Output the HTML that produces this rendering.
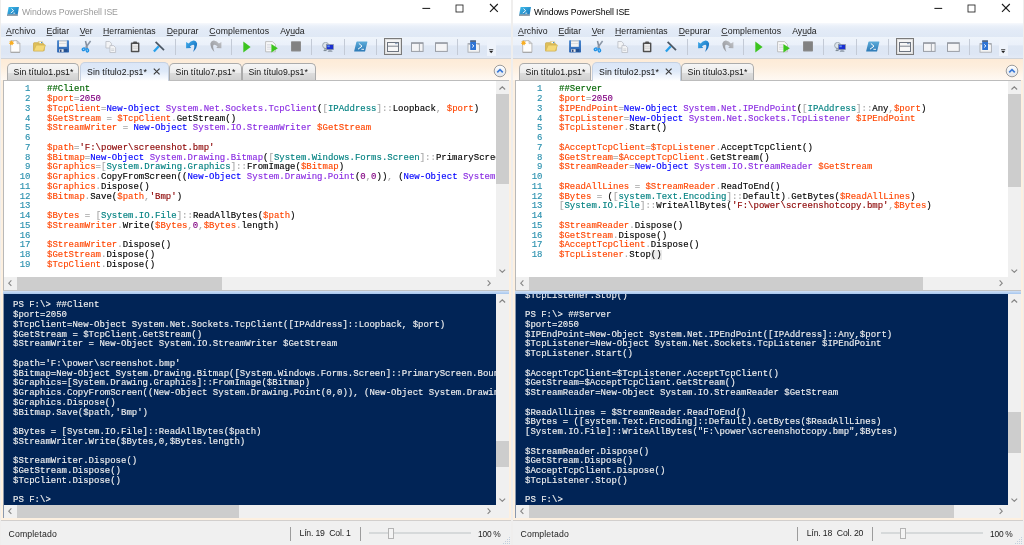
<!DOCTYPE html>
<html lang="es"><head><meta charset="utf-8"><title>Windows PowerShell ISE</title>
<style>
*{box-sizing:border-box;margin:0;padding:0}
html,body{width:1024px;height:545px;overflow:hidden;background:#fdf0e0}
body{position:relative;font-family:"Liberation Sans","DejaVu Sans",sans-serif;font-size:9px;color:#1a1a1a}
.win{position:absolute;top:0;will-change:transform;width:512px;height:545px;background:#fdf0e0;overflow:hidden}
.win>*{position:absolute;left:0;width:512px}
.win>.bl{left:0;top:0;width:1px;height:545px;background:#efeeed;z-index:5}
.win>.br{left:511px;top:0;width:1px;height:545px;background:#efeeed;z-index:5}
.titlebar{top:0;height:23px;background:#fff}
.appicon{position:absolute;left:7px;top:7px;width:12px;height:9px}
.title{position:absolute;left:22px;top:5.8px;height:12px;line-height:12px;font-size:8.7px;white-space:nowrap;color:#000}
.inactive .title{color:#9a9a9a}
.wc{position:absolute}
.menubar{top:23px;height:14px;background:linear-gradient(#f7f9fd 0,#eaf0f9 22%,#e3ebf7 50%,#dfe8f5 100%)}
.mi{position:absolute;top:1.5px;height:12px;line-height:12px;font-size:8.7px;white-space:nowrap;color:#1b1b1b}
.mi u{text-decoration:underline;text-decoration-color:rgba(0,0,0,.6);text-underline-offset:1px;text-decoration-thickness:0.5px}
.toolbar{top:37px;height:21px;background:linear-gradient(#eff4fb 0,#eaf0fa 38%,#dee7f4 42%,#dde6f4 80%,#e3eaf6 100%)}
.toolbar svg{position:absolute}
.tsep{position:absolute;top:1.5px;width:1px;height:16px;background:#c3cad6}
.tabstrip{top:58px;height:22px;background:linear-gradient(#fdebd7 0,#fdeedd 35%,#fff9f3 100%);border-top:1px solid #cfd3d9}
.tab{position:absolute;top:4px;height:18px;border:1px solid #ababab;border-bottom:none;border-radius:5px 5px 0 0;background:linear-gradient(#f6f6f6 0,#ececec 50%,#dddddd 52%,#d0d0d0 100%);white-space:nowrap}
.tab .tt{position:absolute;left:5.5px;top:2.4px;line-height:12px;font-size:8.7px;color:#111}
.tab.act{top:3px;height:19px;background:linear-gradient(#dbe6f7 0,#dee9f8 45%,#f3f7fd 80%,#ffffff 100%);border-color:#c6d1e1;z-index:2}
.tab.act .tt{top:3.4px;left:6px}
.tx{position:absolute;left:71.5px;top:4.8px;width:7.4px;height:7px}
.tx path{stroke:#3c3c3c;stroke-width:1.35;fill:none}
.collapse{position:absolute;left:493px;top:5px;width:14px;height:14px}
.editor{top:80px;height:210px;left:3px!important;width:506px!important;background:#fff;border-left:1px solid #b9b9b9;border-top:1px solid #bcbcbc}
.edtext{position:absolute;left:0;top:0;width:492px;height:196px;overflow:hidden;font-family:"Liberation Mono","DejaVu Sans Mono",monospace;font-size:9px}
.ln,.cl,.kl{-webkit-text-stroke:0.14px;position:absolute;height:12px;line-height:12px;white-space:pre;letter-spacing:0}
.ln{left:0;width:26.5px;text-align:right;color:#2b91af}
.cl{left:43px;color:#000}
.c{color:#006400}.v{color:#ff4500}.o{color:#a9a9a9}.k{color:#0000ff}.a{color:#8a2be2}.n{color:#800080}.s{color:#8b0000}.t{color:#008080}
.hl{background:#ebebeb}
.vs{position:absolute;left:492px;width:13px;background:#f0f0f0}
.hs{position:absolute;left:0;width:505px;height:13px;background:#f0f0f0}
.thumb{position:absolute;left:0;width:13px;background:#cdcdcd}
.thumbh{position:absolute;top:0;height:13px;background:#cdcdcd}
.arr{position:absolute;left:3.2px;width:6.6px;height:4px}
.arrh{position:absolute;top:3.4px;width:4px;height:6.4px}
.arr path,.arrh path{fill:none;stroke:#858585;stroke-width:1.2}
.splitter{top:290px;height:4px;left:3px!important;width:506px!important;background:linear-gradient(#c4c4c4 0,#c4c4c4 22%,#cfe0f6 26%,#a6c6ee 100%)}
.console{top:294px;height:224px;left:3px!important;width:506px!important;background:#012456;border-left:1px solid #8a98ad}
.context{position:absolute;left:0;top:0;width:492px;height:211px;overflow:hidden;font-family:"Liberation Mono","DejaVu Sans Mono",monospace;font-size:9px;color:#f0f0f0}
.kl{left:9px}
.statusbar{top:520px;height:25px;background:#f0f0f0;border-top:1px solid #d2cfcd}
.st{position:absolute;top:7px;height:12px;line-height:12px;font-size:8.7px;white-space:nowrap;color:#1b1b1b}
.st.pos{top:5.8px}
.st.zoom{top:7.2px;font-size:8.4px}
.ssep{position:absolute;top:6px;width:1px;height:14px;background:#9c9c9c}
.strack{position:absolute;left:369px;top:10.6px;width:102px;height:2.8px;background:#e4e7e8;border:0.5px solid #d6d9da}
.sthumb{position:absolute;left:387.5px;top:7px;width:6.5px;height:11px;background:#f4f4f4;border:1px solid #b4b4b4}
.grip{position:absolute;left:501.5px;top:14.5px;width:9px;height:9px}

</style></head><body>

<div class="win inactive" style="left:0px"><i class="bl"></i><i class="br"></i>
 <div class="titlebar">
  <svg class="appicon" viewBox="0 0 12 9"><defs><linearGradient id="ag0" x1="0" y1="0" x2="1" y2="1"><stop offset="0" stop-color="#3fc0ee"/><stop offset="1" stop-color="#176cb3"/></linearGradient></defs><path d="M1.6 0 H12 L10.4 9 H0 Z" fill="url(#ag0)"/><path d="M0.3 7.3 H10.7 L10.4 9 H0 Z" fill="#93a0ab"/><path d="M4.6 1.5 L6.6 3.8 L3.8 6" fill="none" stroke="#fff" stroke-width="0.9"/><path d="M6.3 6.2 H8.2" stroke="#fff" stroke-width="0.8"/></svg>
  <span class="title" style="letter-spacing:-0.101px;">Windows PowerShell ISE</span>
  <svg class="wc" style="left:421.5px;top:3px" width="10" height="10" viewBox="0 0 10 10"><path d="M0.4 5.4 H8.2" stroke="#1c1c1c" stroke-width="1.05" fill="none"/></svg>
  <svg class="wc" style="left:455px;top:3.5px" width="10" height="10" viewBox="0 0 10 10"><rect x="1" y="1" width="7" height="7" stroke="#222" stroke-width="0.85" fill="none"/></svg>
  <svg class="wc" style="left:489px;top:3.2px" width="10" height="10" viewBox="0 0 10 10"><path d="M1 1 L8.8 8.8 M8.8 1 L1 8.8" stroke="#1c1c1c" stroke-width="1.15" fill="none"/></svg>
 </div>
 <div class="menubar">
  <span class="mi" style="left:6px;letter-spacing:0.088px;"><u>A</u>rchivo</span>
  <span class="mi" style="left:46.5px;letter-spacing:-0.034px;"><u>E</u>ditar</span>
  <span class="mi" style="left:79.7px;letter-spacing:-0.104px;"><u>V</u>er</span>
  <span class="mi" style="left:103px;letter-spacing:0.049px;"><u>H</u>erramientas</span>
  <span class="mi" style="left:166.7px;letter-spacing:0.071px;"><u>D</u>epurar</span>
  <span class="mi" style="left:209.3px;letter-spacing:0.130px;"><u>C</u>omplementos</span>
  <span class="mi" style="left:280.3px;letter-spacing:-0.070px;">Ay<u>u</u>da</span>
 </div>
 <div class="toolbar">
  <!-- new -->
  <svg style="left:9px;top:3px" width="12" height="13" viewBox="0 0 12 13"><path d="M1.7 0.7 H8 L10.9 3.6 V12.2 H1.7 Z" fill="#fdfdfd" stroke="#b4b4b4" stroke-width="0.9"/><path d="M1.7 12.4 H10.9" stroke="#9a9a9a" stroke-width="0.8"/><path d="M8 0.7 V3.6 H10.9 Z" fill="#dcdcdc" stroke="#b0b0b0" stroke-width="0.6"/><path d="M2.5 0.2 L3.2 1.6 L4.7 1.1 L4.1 2.6 L5.3 3.6 L3.8 4 L3.6 5.6 L2.5 4.5 L1.2 5.5 L1.2 3.9 L-0.3 3.4 L1 2.5 L0.4 1 L1.9 1.5 Z" fill="#f9ae22"/></svg>
  <!-- open -->
  <svg style="left:32.5px;top:4px" width="13" height="11" viewBox="0 0 13 11"><path d="M5 0.9 H9.6 V3.6 H5 Z" fill="#f3e6a8" stroke="#d1b04f" stroke-width="0.7"/><rect x="6.6" y="0.9" width="2.6" height="1.6" fill="#fff"/><rect x="8" y="1" width="1.2" height="1.1" fill="#3f8fd8"/><path d="M0.5 9.6 V2.4 Q0.5 1.7 1.2 1.7 H4.6 L5.6 2.8 H10.6 Q11.2 2.8 11.2 3.5 V9.6 Z" fill="#dfc05a" stroke="#c8a646" stroke-width="0.7"/><path d="M0.6 10.1 L3.2 4.1 H12.4 L10.4 10.1 Z" fill="#f4d978" stroke="#d3b352" stroke-width="0.7"/></svg>
  <!-- save -->
  <svg style="left:57px;top:3px" width="12" height="13" viewBox="0 0 12 13"><defs><linearGradient id="svg10" x1="0" y1="0" x2="0" y2="1"><stop offset="0" stop-color="#4a88cf"/><stop offset="1" stop-color="#2a63b0"/></linearGradient></defs><rect x="0.1" y="0.2" width="11.9" height="12.3" rx="0.7" fill="url(#svg10)"/><rect x="2" y="0.5" width="7.8" height="6.3" fill="#f4f4f4"/><rect x="2" y="0.5" width="7.8" height="1.1" fill="#c9c9c9"/><rect x="2" y="3.3" width="7.8" height="0.7" fill="#d4d4d4"/><rect x="2" y="9" width="8.4" height="2.9" fill="#24508f"/><rect x="2.2" y="9.2" width="4.4" height="2.7" fill="#e9e9e9"/><rect x="3" y="9.6" width="1.5" height="2.3" fill="#28437a"/></svg>
  <!-- cut -->
  <svg style="left:81px;top:3px" width="11" height="13" viewBox="0 0 11 13"><path d="M4.5 1 L6.2 8.4" stroke="#7f8b9b" stroke-width="1.5" fill="none"/><path d="M9.6 1 L4.6 7.8" stroke="#8a96a6" stroke-width="1.5" fill="none"/><ellipse cx="2.7" cy="9.2" rx="1.5" ry="1.2" transform="rotate(-35 2.7 9.2)" fill="#8fd0f7" stroke="#1e8fe4" stroke-width="1.3"/><ellipse cx="6.3" cy="10.3" rx="1.2" ry="1.7" transform="rotate(-15 6.3 10.3)" fill="#8fd0f7" stroke="#1e8fe4" stroke-width="1.3"/></svg>
  <!-- copy (disabled) -->
  <svg style="left:105px;top:4px" width="12" height="12" viewBox="0 0 12 12"><path d="M0.9 0.5 H4.6 L6.4 2.3 V7 H0.9 Z" fill="#f3f4f6" stroke="#b9bdc4" stroke-width="0.8"/><path d="M4.9 4.6 H8.6 L10.6 6.6 V11.5 H4.9 Z" fill="#f3f4f6" stroke="#b9bdc4" stroke-width="0.8"/><path d="M6.2 8 H9.2 M6.2 9.5 H9.2" stroke="#c3c7cd" stroke-width="0.7"/></svg>
  <!-- paste -->
  <svg style="left:130px;top:3.5px" width="11" height="12" viewBox="0 0 11 12"><rect x="0.8" y="1.6" width="8.6" height="9.6" rx="0.8" fill="#4e4e4e"/><rect x="2.2" y="3" width="5.8" height="6.8" fill="#ededed"/><path d="M2.2 5.2 H8 M2.2 7.2 H8" stroke="#c4c4c4" stroke-width="0.7"/><rect x="3.2" y="0.6" width="3.8" height="2" rx="0.6" fill="#4e4e4e"/></svg>
  <!-- clear -->
  <svg style="left:153px;top:3.5px" width="12" height="12" viewBox="0 0 12 12"><path d="M5.8 5.2 L0.9 10.6" stroke="#27a0ea" stroke-width="2.2" fill="none"/><path d="M2.6 0.8 L11 9.2" stroke="#4a5663" stroke-width="1.7" fill="none"/></svg>
  <i class="tsep" style="left:174.5px"></i>
  <!-- undo -->
  <svg style="left:186px;top:3px" width="12" height="13" viewBox="0 0 12 13"><defs><linearGradient id="ug0" x1="0" y1="0" x2="1" y2="1"><stop offset="0" stop-color="#44b0ee"/><stop offset="1" stop-color="#0a62b5"/></linearGradient></defs><path d="M0.1 1.9 L0.1 8.3 L5.2 8 L3.9 6.2 Q6.5 4 8 4.9 Q9 6.5 7.1 11.9 Q11.5 7.5 11.1 3.2 Q10 0.2 7.5 0.5 Q4.5 0.8 2.6 3.6 Z" fill="url(#ug0)"/></svg>
  <!-- redo (disabled) -->
  <svg style="left:209.5px;top:3px" width="12" height="13" viewBox="0 0 12 13"><defs><linearGradient id="rg0" x1="0" y1="0" x2="1" y2="1"><stop offset="0" stop-color="#c2c4c8"/><stop offset="1" stop-color="#8d9096"/></linearGradient></defs><g transform="translate(11.5 0) scale(-1 1)"><path d="M0.1 1.9 L0.1 8.3 L5.2 8 L3.9 6.2 Q6.5 4 8 4.9 Q9 6.5 7.1 11.9 Q11.5 7.5 11.1 3.2 Q10 0.2 7.5 0.5 Q4.5 0.8 2.6 3.6 Z" fill="url(#rg0)"/></g></svg>
  <i class="tsep" style="left:231px"></i>
  <!-- run -->
  <svg style="left:243px;top:3.5px" width="8" height="12" viewBox="0 0 8 12"><path d="M0.3 0.4 L7.6 6 L0.3 11.4 Z" fill="#3cc41f"/></svg>
  <!-- run selection -->
  <svg style="left:265px;top:3.5px" width="13" height="12" viewBox="0 0 13 12"><path d="M0.6 0.6 H7.4 L10.4 3.4 V10.8 H0.6 Z" fill="#fafafa" stroke="#b2b2b2" stroke-width="0.8"/><path d="M2 3.4 H6 M2 5 H6 M2 6.6 H6 M2 8.2 H6" stroke="#c6c8d4" stroke-width="0.6"/><path d="M6.4 3 L12.8 7.2 L6.4 11.6 Z" fill="#3cc41f"/></svg>
  <!-- stop -->
  <svg style="left:291px;top:4px" width="10" height="11" viewBox="0 0 10 11"><rect x="0" y="0.2" width="10" height="10.3" rx="0.8" fill="#8c8c8c"/><rect x="1" y="1.2" width="8" height="8.3" fill="#828282"/></svg>
  <i class="tsep" style="left:311px"></i>
  <!-- remote -->
  <svg style="left:322px;top:4.5px" width="12" height="10" viewBox="0 0 12 10"><circle cx="3.6" cy="3.4" r="3" fill="#dde4ea" stroke="#8c9aa6" stroke-width="0.8"/><path d="M3 6 V8.4 M1.6 8.6 H4.6" stroke="#6d7a86" stroke-width="0.9"/><rect x="4.4" y="2.6" width="7" height="5" fill="#1a2fd0" stroke="#8a94a0" stroke-width="0.7"/><rect x="5.4" y="3.4" width="2.4" height="1.8" fill="#5b8df5"/><path d="M6.6 8.2 H9.6 M5.8 9.3 H10.4" stroke="#7a8794" stroke-width="0.8"/></svg>
  <i class="tsep" style="left:344px"></i>
  <!-- powershell -->
  <svg style="left:354px;top:3.5px" width="14" height="11" viewBox="0 0 14 11"><defs><linearGradient id="psg0" x1="0" y1="0" x2="0" y2="1"><stop offset="0" stop-color="#5eadda"/><stop offset="1" stop-color="#2c79b6"/></linearGradient></defs><path d="M3 0.4 H13 Q13.6 0.4 13.4 1 L11.2 10 Q11 10.6 10.4 10.6 H0.6 Q0 10.6 0.2 10 L2.4 1 Q2.6 0.4 3 0.4 Z" fill="url(#psg0)"/><path d="M4.8 2.4 L8 5.2 L4 8.2" fill="none" stroke="#fff" stroke-width="1"/><path d="M7.4 8.3 H10" stroke="#fff" stroke-width="0.9"/></svg>
  <i class="tsep" style="left:376px"></i>
  <!-- layout selected -->
  <div style="position:absolute;left:384px;top:1px;width:18px;height:17px;border:1px solid #7a7a7a;background:linear-gradient(#f6f6f6,#ececec);box-shadow:inset 0 0 0 1px #dedede"></div>
  <svg style="left:387px;top:4.5px" width="12" height="10" viewBox="0 0 12 10"><rect x="0.5" y="0.5" width="11" height="9" fill="#f7f7f7" stroke="#6e7580" stroke-width="1"/><path d="M0.5 4.2 H11.5" stroke="#6e7580" stroke-width="0.9"/><rect x="8" y="1.2" width="2.6" height="0.9" fill="#7f97b8"/></svg>
  <!-- layout right -->
  <svg style="left:411px;top:4.5px" width="13" height="10" viewBox="0 0 13 10"><rect x="0.5" y="0.8" width="11.6" height="8.6" fill="#f4f4f6" stroke="#9a9ea6" stroke-width="1"/><path d="M0.5 1.2 H12.1" stroke="#8e939c" stroke-width="1.1"/><path d="M8.4 1 V9.4" stroke="#9a9ea6" stroke-width="0.9"/></svg>
  <!-- layout max -->
  <svg style="left:435px;top:4.5px" width="13" height="10" viewBox="0 0 13 10"><rect x="0.5" y="0.8" width="11.8" height="8.6" fill="#f4f4f6" stroke="#9a9ea6" stroke-width="1"/><path d="M0.5 1.2 H12.3" stroke="#8e939c" stroke-width="1.1"/></svg>
  <i class="tsep" style="left:457px"></i>
  <!-- addon -->
  <svg style="left:467px;top:3px" width="13" height="13" viewBox="0 0 13 13"><rect x="1" y="3.6" width="11.4" height="8.6" fill="#f4f4f4" stroke="#a9adb3" stroke-width="0.9"/><rect x="1.4" y="3.4" width="1.6" height="1.2" fill="#9aa0a8"/><rect x="10.4" y="3.4" width="1.6" height="1.2" fill="#9aa0a8"/><rect x="3.2" y="0.4" width="5.8" height="9.6" rx="0.5" fill="#2f74d4"/><rect x="3.2" y="0.4" width="5.8" height="1.4" fill="#5a6576"/><path d="M5.2 4.4 L6.9 5.9 L5.2 7.4" fill="none" stroke="#fff" stroke-width="1"/></svg>
  <!-- overflow -->
  <div style="position:absolute;left:487px;top:1px;width:9px;height:18px;background:#eef3fb"></div>
  <svg style="left:489.2px;top:12.2px" width="4.4" height="5" viewBox="0 0 5 6"><path d="M0 0.5 H5" stroke="#222" stroke-width="0.9"/><path d="M0 2.2 H5 L2.5 5 Z" fill="#222"/></svg>

 </div>
 <div class="tabstrip">
  <div class="tab" style="left:7px;width:72px"><span class="tt" style="letter-spacing:0.098px;">Sin título1.ps1*</span></div><div class="tab act" style="left:80px;width:89px"><span class="tt" style="letter-spacing:0.098px;">Sin título2.ps1*</span><svg class="tx" viewBox="0 0 8 8"><path d="M0.7 0.7 L7.3 7.3 M7.3 0.7 L0.7 7.3"/></svg></div><div class="tab" style="left:169px;width:73px"><span class="tt" style="letter-spacing:0.098px;">Sin título7.ps1*</span></div><div class="tab" style="left:242px;width:74px"><span class="tt" style="letter-spacing:0.060px;">Sin título9.ps1*</span></div>
  <svg class="collapse" viewBox="0 0 14 14"><defs><linearGradient id="cg0" x1="0" y1="0" x2="0" y2="1"><stop offset="0" stop-color="#ffffff"/><stop offset="1" stop-color="#dfe3ea"/></linearGradient></defs><circle cx="7" cy="7" r="5.8" fill="url(#cg0)" stroke="#9c9c9c" stroke-width="1"/><path d="M4.2 8.4 L7 5.6 L9.8 8.4" fill="none" stroke="#3b79d6" stroke-width="1.7"/></svg>
 </div>
 <div class="editor">
  <div class="edtext">
<div class="ln" style="top:2.30px">1</div>
<div class="ln" style="top:12.05px">2</div>
<div class="ln" style="top:21.80px">3</div>
<div class="ln" style="top:31.55px">4</div>
<div class="ln" style="top:41.30px">5</div>
<div class="ln" style="top:51.05px">6</div>
<div class="ln" style="top:60.80px">7</div>
<div class="ln" style="top:70.55px">8</div>
<div class="ln" style="top:80.30px">9</div>
<div class="ln" style="top:90.05px">10</div>
<div class="ln" style="top:99.80px">11</div>
<div class="ln" style="top:109.55px">12</div>
<div class="ln" style="top:119.30px">13</div>
<div class="ln" style="top:129.05px">14</div>
<div class="ln" style="top:138.80px">15</div>
<div class="ln" style="top:148.55px">16</div>
<div class="ln" style="top:158.30px">17</div>
<div class="ln" style="top:168.05px">18</div>
<div class="ln" style="top:177.80px">19</div>
<div class="cl" style="top:2.30px"><span class="c">##Client</span></div>
<div class="cl" style="top:12.05px"><span class="v">$port</span><span class="o">=</span><span class="n">2050</span></div>
<div class="cl" style="top:21.80px"><span class="v">$TcpClient</span><span class="o">=</span><span class="k">New-Object</span> <span class="a">System.Net.Sockets.TcpClient</span>(<span class="o">[</span><span class="t">IPAddress</span><span class="o">]</span><span class="o">::</span>Loopback<span class="o">,</span> <span class="v">$port</span>)</div>
<div class="cl" style="top:31.55px"><span class="v">$GetStream</span> <span class="o">=</span> <span class="v">$TcpClient</span><span class="o">.</span>GetStream()</div>
<div class="cl" style="top:41.30px"><span class="v">$StreamWriter</span> <span class="o">=</span> <span class="k">New-Object</span> <span class="a">System.IO.StreamWriter</span> <span class="v">$GetStream</span></div>
<div class="cl" style="top:60.80px"><span class="v">$path</span><span class="o">=</span><span class="s">&#x27;F:\power\screenshot.bmp&#x27;</span></div>
<div class="cl" style="top:70.55px"><span class="v">$Bitmap</span><span class="o">=</span><span class="k">New-Object</span> <span class="a">System.Drawing.Bitmap</span>(<span class="o">[</span><span class="t">System.Windows.Forms.Screen</span><span class="o">]</span><span class="o">::</span>PrimaryScreen<span class="o">.</span>Bounds<span class="o">.</span>Width<span class="o">,</span> <span class="o">[</span><span class="t">System.Windows.Forms.Screen</span><span class="o">]</span><span class="o">::</span>PrimaryScreen<span class="o">.</span>Bounds<span class="o">.</span>Height)</div>
<div class="cl" style="top:80.30px"><span class="v">$Graphics</span><span class="o">=</span><span class="o">[</span><span class="t">System.Drawing.Graphics</span><span class="o">]</span><span class="o">::</span>FromImage(<span class="v">$Bitmap</span>)</div>
<div class="cl" style="top:90.05px"><span class="v">$Graphics</span><span class="o">.</span>CopyFromScreen((<span class="k">New-Object</span> <span class="a">System.Drawing.Point</span>(<span class="n">0</span><span class="o">,</span><span class="n">0</span>))<span class="o">,</span> (<span class="k">New-Object</span> <span class="a">System.Drawing.Point</span>(<span class="n">0</span><span class="o">,</span><span class="n">0</span>))<span class="o">,</span> <span class="v">$Bitmap</span><span class="o">.</span>Size)</div>
<div class="cl" style="top:99.80px"><span class="v">$Graphics</span><span class="o">.</span>Dispose()</div>
<div class="cl" style="top:109.55px"><span class="v">$Bitmap</span><span class="o">.</span>Save(<span class="v">$path</span><span class="o">,</span><span class="s">&#x27;Bmp&#x27;</span>)</div>
<div class="cl" style="top:129.05px"><span class="v">$Bytes</span> <span class="o">=</span> <span class="o">[</span><span class="t">System.IO.File</span><span class="o">]</span><span class="o">::</span>ReadAllBytes(<span class="v">$path</span>)</div>
<div class="cl" style="top:138.80px"><span class="v">$StreamWriter</span><span class="o">.</span>Write(<span class="v">$Bytes</span><span class="o">,</span><span class="n">0</span><span class="o">,</span><span class="v">$Bytes</span><span class="o">.</span>length)</div>
<div class="cl" style="top:158.30px"><span class="v">$StreamWriter</span><span class="o">.</span>Dispose()</div>
<div class="cl" style="top:168.05px"><span class="v">$GetStream</span><span class="o">.</span>Dispose()</div>
<div class="cl" style="top:177.80px"><span class="v">$TcpClient</span><span class="o">.</span>Dispose()</div>
  </div>
  <div class="vs" style="top:0;height:196px">
   <svg class="arr" style="top:4.8px" viewBox="0 0 7 4"><path d="M0.5 3.6 L3.5 0.7 L6.5 3.6"/></svg>
   <div class="thumb" style="top:13px;height:89.5px"></div>
   <svg class="arr" style="top:188.3px" viewBox="0 0 7 4"><path d="M0.5 0.5 L3.5 3.4 L6.5 0.5"/></svg>
  </div>
  <div class="hs" style="top:196px">
   <svg class="arrh" style="left:4px" viewBox="0 0 4 7"><path d="M3.5 0.5 L0.6 3.5 L3.5 6.5"/></svg>
   <div class="thumbh" style="left:12.5px;width:205.5px"></div>
   <svg class="arrh" style="left:483px" viewBox="0 0 4 7"><path d="M0.5 0.5 L3.4 3.5 L0.5 6.5"/></svg>
  </div>
 </div>
 <div class="splitter"></div>
 <div class="console">
  <div class="context">
<div class="kl" style="top:5.40px">PS F:\&gt; ##Client</div>
<div class="kl" style="top:15.15px">$port=2050</div>
<div class="kl" style="top:24.90px">$TcpClient=New-Object System.Net.Sockets.TcpClient([IPAddress]::Loopback, $port)</div>
<div class="kl" style="top:34.65px">$GetStream = $TcpClient.GetStream()</div>
<div class="kl" style="top:44.40px">$StreamWriter = New-Object System.IO.StreamWriter $GetStream</div>
<div class="kl" style="top:63.90px">$path=&#x27;F:\power\screenshot.bmp&#x27;</div>
<div class="kl" style="top:73.65px">$Bitmap=New-Object System.Drawing.Bitmap([System.Windows.Forms.Screen]::PrimaryScreen.Bounds.Width, [System.Windows.Forms.Screen]::PrimaryScreen.Bounds.Height)</div>
<div class="kl" style="top:83.40px">$Graphics=[System.Drawing.Graphics]::FromImage($Bitmap)</div>
<div class="kl" style="top:93.15px">$Graphics.CopyFromScreen((New-Object System.Drawing.Point(0,0)), (New-Object System.Drawing.Point(0,0)), $Bitmap.Size)</div>
<div class="kl" style="top:102.90px">$Graphics.Dispose()</div>
<div class="kl" style="top:112.65px">$Bitmap.Save($path,&#x27;Bmp&#x27;)</div>
<div class="kl" style="top:132.15px">$Bytes = [System.IO.File]::ReadAllBytes($path)</div>
<div class="kl" style="top:141.90px">$StreamWriter.Write($Bytes,0,$Bytes.length)</div>
<div class="kl" style="top:161.40px">$StreamWriter.Dispose()</div>
<div class="kl" style="top:171.15px">$GetStream.Dispose()</div>
<div class="kl" style="top:180.90px">$TcpClient.Dispose()</div>
<div class="kl" style="top:200.40px">PS F:\&gt;</div>
  </div>
  <div class="vs" style="top:0;height:211px">
   <svg class="arr" style="top:4.8px" viewBox="0 0 7 4"><path d="M0.5 3.6 L3.5 0.7 L6.5 3.6"/></svg>
   <div class="thumb" style="top:147px;height:26px"></div>
   <svg class="arr" style="top:203.7px" viewBox="0 0 7 4"><path d="M0.5 0.5 L3.5 3.4 L6.5 0.5"/></svg>
  </div>
  <div class="hs" style="top:211px">
   <svg class="arrh" style="left:4px" viewBox="0 0 4 7"><path d="M3.5 0.5 L0.6 3.5 L3.5 6.5"/></svg>
   <div class="thumbh" style="left:12.5px;width:222.2px"></div>
   <svg class="arrh" style="left:483px" viewBox="0 0 4 7"><path d="M0.5 0.5 L3.4 3.5 L0.5 6.5"/></svg>
  </div>
 </div>
 <div class="statusbar">
  <span class="st" style="left:8.5px;letter-spacing:0.154px;">Completado</span>
  <i class="ssep" style="left:290px"></i>
  <span class="st pos" style="left:299.5px;letter-spacing:-0.190px;">Lín. 19&nbsp; Col. 1</span>
  <i class="ssep" style="left:360px"></i>
  <i class="strack"></i><i class="sthumb"></i>
  <span class="st zoom" style="left:478px;word-spacing:-0.4px;letter-spacing:-0.192px;">100 %</span>
  <svg class="grip" viewBox="0 0 9 9"><g fill="#c3cfdd"><rect x="7" y="1" width="1" height="1"/><rect x="7" y="3" width="1" height="1"/><rect x="5" y="3" width="1" height="1"/><rect x="7" y="5" width="1" height="1"/><rect x="5" y="5" width="1" height="1"/><rect x="3" y="5" width="1" height="1"/><rect x="7" y="7" width="1" height="1"/><rect x="5" y="7" width="1" height="1"/><rect x="3" y="7" width="1" height="1"/><rect x="1" y="7" width="1" height="1"/></g></svg>
 </div>
</div>

<div class="win active" style="left:512px"><i class="bl"></i><i class="br"></i>
 <div class="titlebar">
  <svg class="appicon" viewBox="0 0 12 9"><defs><linearGradient id="ag1" x1="0" y1="0" x2="1" y2="1"><stop offset="0" stop-color="#3fc0ee"/><stop offset="1" stop-color="#176cb3"/></linearGradient></defs><path d="M1.6 0 H12 L10.4 9 H0 Z" fill="url(#ag1)"/><path d="M0.3 7.3 H10.7 L10.4 9 H0 Z" fill="#93a0ab"/><path d="M4.6 1.5 L6.6 3.8 L3.8 6" fill="none" stroke="#fff" stroke-width="0.9"/><path d="M6.3 6.2 H8.2" stroke="#fff" stroke-width="0.8"/></svg>
  <span class="title" style="letter-spacing:-0.101px;">Windows PowerShell ISE</span>
  <svg class="wc" style="left:421.5px;top:3px" width="10" height="10" viewBox="0 0 10 10"><path d="M0.4 5.4 H8.2" stroke="#1c1c1c" stroke-width="1.05" fill="none"/></svg>
  <svg class="wc" style="left:455px;top:3.5px" width="10" height="10" viewBox="0 0 10 10"><rect x="1" y="1" width="7" height="7" stroke="#222" stroke-width="0.85" fill="none"/></svg>
  <svg class="wc" style="left:489px;top:3.2px" width="10" height="10" viewBox="0 0 10 10"><path d="M1 1 L8.8 8.8 M8.8 1 L1 8.8" stroke="#1c1c1c" stroke-width="1.15" fill="none"/></svg>
 </div>
 <div class="menubar">
  <span class="mi" style="left:6px;letter-spacing:0.088px;"><u>A</u>rchivo</span>
  <span class="mi" style="left:46.5px;letter-spacing:-0.034px;"><u>E</u>ditar</span>
  <span class="mi" style="left:79.7px;letter-spacing:-0.104px;"><u>V</u>er</span>
  <span class="mi" style="left:103px;letter-spacing:0.049px;"><u>H</u>erramientas</span>
  <span class="mi" style="left:166.7px;letter-spacing:0.071px;"><u>D</u>epurar</span>
  <span class="mi" style="left:209.3px;letter-spacing:0.130px;"><u>C</u>omplementos</span>
  <span class="mi" style="left:280.3px;letter-spacing:-0.070px;">Ay<u>u</u>da</span>
 </div>
 <div class="toolbar">
  <!-- new -->
  <svg style="left:9px;top:3px" width="12" height="13" viewBox="0 0 12 13"><path d="M1.7 0.7 H8 L10.9 3.6 V12.2 H1.7 Z" fill="#fdfdfd" stroke="#b4b4b4" stroke-width="0.9"/><path d="M1.7 12.4 H10.9" stroke="#9a9a9a" stroke-width="0.8"/><path d="M8 0.7 V3.6 H10.9 Z" fill="#dcdcdc" stroke="#b0b0b0" stroke-width="0.6"/><path d="M2.5 0.2 L3.2 1.6 L4.7 1.1 L4.1 2.6 L5.3 3.6 L3.8 4 L3.6 5.6 L2.5 4.5 L1.2 5.5 L1.2 3.9 L-0.3 3.4 L1 2.5 L0.4 1 L1.9 1.5 Z" fill="#f9ae22"/></svg>
  <!-- open -->
  <svg style="left:32.5px;top:4px" width="13" height="11" viewBox="0 0 13 11"><path d="M5 0.9 H9.6 V3.6 H5 Z" fill="#f3e6a8" stroke="#d1b04f" stroke-width="0.7"/><rect x="6.6" y="0.9" width="2.6" height="1.6" fill="#fff"/><rect x="8" y="1" width="1.2" height="1.1" fill="#3f8fd8"/><path d="M0.5 9.6 V2.4 Q0.5 1.7 1.2 1.7 H4.6 L5.6 2.8 H10.6 Q11.2 2.8 11.2 3.5 V9.6 Z" fill="#dfc05a" stroke="#c8a646" stroke-width="0.7"/><path d="M0.6 10.1 L3.2 4.1 H12.4 L10.4 10.1 Z" fill="#f4d978" stroke="#d3b352" stroke-width="0.7"/></svg>
  <!-- save -->
  <svg style="left:57px;top:3px" width="12" height="13" viewBox="0 0 12 13"><defs><linearGradient id="svg11" x1="0" y1="0" x2="0" y2="1"><stop offset="0" stop-color="#4a88cf"/><stop offset="1" stop-color="#2a63b0"/></linearGradient></defs><rect x="0.1" y="0.2" width="11.9" height="12.3" rx="0.7" fill="url(#svg11)"/><rect x="2" y="0.5" width="7.8" height="6.3" fill="#f4f4f4"/><rect x="2" y="0.5" width="7.8" height="1.1" fill="#c9c9c9"/><rect x="2" y="3.3" width="7.8" height="0.7" fill="#d4d4d4"/><rect x="2" y="9" width="8.4" height="2.9" fill="#24508f"/><rect x="2.2" y="9.2" width="4.4" height="2.7" fill="#e9e9e9"/><rect x="3" y="9.6" width="1.5" height="2.3" fill="#28437a"/></svg>
  <!-- cut -->
  <svg style="left:81px;top:3px" width="11" height="13" viewBox="0 0 11 13"><path d="M4.5 1 L6.2 8.4" stroke="#7f8b9b" stroke-width="1.5" fill="none"/><path d="M9.6 1 L4.6 7.8" stroke="#8a96a6" stroke-width="1.5" fill="none"/><ellipse cx="2.7" cy="9.2" rx="1.5" ry="1.2" transform="rotate(-35 2.7 9.2)" fill="#8fd0f7" stroke="#1e8fe4" stroke-width="1.3"/><ellipse cx="6.3" cy="10.3" rx="1.2" ry="1.7" transform="rotate(-15 6.3 10.3)" fill="#8fd0f7" stroke="#1e8fe4" stroke-width="1.3"/></svg>
  <!-- copy (disabled) -->
  <svg style="left:105px;top:4px" width="12" height="12" viewBox="0 0 12 12"><path d="M0.9 0.5 H4.6 L6.4 2.3 V7 H0.9 Z" fill="#f3f4f6" stroke="#b9bdc4" stroke-width="0.8"/><path d="M4.9 4.6 H8.6 L10.6 6.6 V11.5 H4.9 Z" fill="#f3f4f6" stroke="#b9bdc4" stroke-width="0.8"/><path d="M6.2 8 H9.2 M6.2 9.5 H9.2" stroke="#c3c7cd" stroke-width="0.7"/></svg>
  <!-- paste -->
  <svg style="left:130px;top:3.5px" width="11" height="12" viewBox="0 0 11 12"><rect x="0.8" y="1.6" width="8.6" height="9.6" rx="0.8" fill="#4e4e4e"/><rect x="2.2" y="3" width="5.8" height="6.8" fill="#ededed"/><path d="M2.2 5.2 H8 M2.2 7.2 H8" stroke="#c4c4c4" stroke-width="0.7"/><rect x="3.2" y="0.6" width="3.8" height="2" rx="0.6" fill="#4e4e4e"/></svg>
  <!-- clear -->
  <svg style="left:153px;top:3.5px" width="12" height="12" viewBox="0 0 12 12"><path d="M5.8 5.2 L0.9 10.6" stroke="#27a0ea" stroke-width="2.2" fill="none"/><path d="M2.6 0.8 L11 9.2" stroke="#4a5663" stroke-width="1.7" fill="none"/></svg>
  <i class="tsep" style="left:174.5px"></i>
  <!-- undo -->
  <svg style="left:186px;top:3px" width="12" height="13" viewBox="0 0 12 13"><defs><linearGradient id="ug1" x1="0" y1="0" x2="1" y2="1"><stop offset="0" stop-color="#44b0ee"/><stop offset="1" stop-color="#0a62b5"/></linearGradient></defs><path d="M0.1 1.9 L0.1 8.3 L5.2 8 L3.9 6.2 Q6.5 4 8 4.9 Q9 6.5 7.1 11.9 Q11.5 7.5 11.1 3.2 Q10 0.2 7.5 0.5 Q4.5 0.8 2.6 3.6 Z" fill="url(#ug1)"/></svg>
  <!-- redo (disabled) -->
  <svg style="left:209.5px;top:3px" width="12" height="13" viewBox="0 0 12 13"><defs><linearGradient id="rg1" x1="0" y1="0" x2="1" y2="1"><stop offset="0" stop-color="#c2c4c8"/><stop offset="1" stop-color="#8d9096"/></linearGradient></defs><g transform="translate(11.5 0) scale(-1 1)"><path d="M0.1 1.9 L0.1 8.3 L5.2 8 L3.9 6.2 Q6.5 4 8 4.9 Q9 6.5 7.1 11.9 Q11.5 7.5 11.1 3.2 Q10 0.2 7.5 0.5 Q4.5 0.8 2.6 3.6 Z" fill="url(#rg1)"/></g></svg>
  <i class="tsep" style="left:231px"></i>
  <!-- run -->
  <svg style="left:243px;top:3.5px" width="8" height="12" viewBox="0 0 8 12"><path d="M0.3 0.4 L7.6 6 L0.3 11.4 Z" fill="#3cc41f"/></svg>
  <!-- run selection -->
  <svg style="left:265px;top:3.5px" width="13" height="12" viewBox="0 0 13 12"><path d="M0.6 0.6 H7.4 L10.4 3.4 V10.8 H0.6 Z" fill="#fafafa" stroke="#b2b2b2" stroke-width="0.8"/><path d="M2 3.4 H6 M2 5 H6 M2 6.6 H6 M2 8.2 H6" stroke="#c6c8d4" stroke-width="0.6"/><path d="M6.4 3 L12.8 7.2 L6.4 11.6 Z" fill="#3cc41f"/></svg>
  <!-- stop -->
  <svg style="left:291px;top:4px" width="10" height="11" viewBox="0 0 10 11"><rect x="0" y="0.2" width="10" height="10.3" rx="0.8" fill="#8c8c8c"/><rect x="1" y="1.2" width="8" height="8.3" fill="#828282"/></svg>
  <i class="tsep" style="left:311px"></i>
  <!-- remote -->
  <svg style="left:322px;top:4.5px" width="12" height="10" viewBox="0 0 12 10"><circle cx="3.6" cy="3.4" r="3" fill="#dde4ea" stroke="#8c9aa6" stroke-width="0.8"/><path d="M3 6 V8.4 M1.6 8.6 H4.6" stroke="#6d7a86" stroke-width="0.9"/><rect x="4.4" y="2.6" width="7" height="5" fill="#1a2fd0" stroke="#8a94a0" stroke-width="0.7"/><rect x="5.4" y="3.4" width="2.4" height="1.8" fill="#5b8df5"/><path d="M6.6 8.2 H9.6 M5.8 9.3 H10.4" stroke="#7a8794" stroke-width="0.8"/></svg>
  <i class="tsep" style="left:344px"></i>
  <!-- powershell -->
  <svg style="left:354px;top:3.5px" width="14" height="11" viewBox="0 0 14 11"><defs><linearGradient id="psg1" x1="0" y1="0" x2="0" y2="1"><stop offset="0" stop-color="#5eadda"/><stop offset="1" stop-color="#2c79b6"/></linearGradient></defs><path d="M3 0.4 H13 Q13.6 0.4 13.4 1 L11.2 10 Q11 10.6 10.4 10.6 H0.6 Q0 10.6 0.2 10 L2.4 1 Q2.6 0.4 3 0.4 Z" fill="url(#psg1)"/><path d="M4.8 2.4 L8 5.2 L4 8.2" fill="none" stroke="#fff" stroke-width="1"/><path d="M7.4 8.3 H10" stroke="#fff" stroke-width="0.9"/></svg>
  <i class="tsep" style="left:376px"></i>
  <!-- layout selected -->
  <div style="position:absolute;left:384px;top:1px;width:18px;height:17px;border:1px solid #7a7a7a;background:linear-gradient(#f6f6f6,#ececec);box-shadow:inset 0 0 0 1px #dedede"></div>
  <svg style="left:387px;top:4.5px" width="12" height="10" viewBox="0 0 12 10"><rect x="0.5" y="0.5" width="11" height="9" fill="#f7f7f7" stroke="#6e7580" stroke-width="1"/><path d="M0.5 4.2 H11.5" stroke="#6e7580" stroke-width="0.9"/><rect x="8" y="1.2" width="2.6" height="0.9" fill="#7f97b8"/></svg>
  <!-- layout right -->
  <svg style="left:411px;top:4.5px" width="13" height="10" viewBox="0 0 13 10"><rect x="0.5" y="0.8" width="11.6" height="8.6" fill="#f4f4f6" stroke="#9a9ea6" stroke-width="1"/><path d="M0.5 1.2 H12.1" stroke="#8e939c" stroke-width="1.1"/><path d="M8.4 1 V9.4" stroke="#9a9ea6" stroke-width="0.9"/></svg>
  <!-- layout max -->
  <svg style="left:435px;top:4.5px" width="13" height="10" viewBox="0 0 13 10"><rect x="0.5" y="0.8" width="11.8" height="8.6" fill="#f4f4f6" stroke="#9a9ea6" stroke-width="1"/><path d="M0.5 1.2 H12.3" stroke="#8e939c" stroke-width="1.1"/></svg>
  <i class="tsep" style="left:457px"></i>
  <!-- addon -->
  <svg style="left:467px;top:3px" width="13" height="13" viewBox="0 0 13 13"><rect x="1" y="3.6" width="11.4" height="8.6" fill="#f4f4f4" stroke="#a9adb3" stroke-width="0.9"/><rect x="1.4" y="3.4" width="1.6" height="1.2" fill="#9aa0a8"/><rect x="10.4" y="3.4" width="1.6" height="1.2" fill="#9aa0a8"/><rect x="3.2" y="0.4" width="5.8" height="9.6" rx="0.5" fill="#2f74d4"/><rect x="3.2" y="0.4" width="5.8" height="1.4" fill="#5a6576"/><path d="M5.2 4.4 L6.9 5.9 L5.2 7.4" fill="none" stroke="#fff" stroke-width="1"/></svg>
  <!-- overflow -->
  <div style="position:absolute;left:487px;top:1px;width:9px;height:18px;background:#eef3fb"></div>
  <svg style="left:489.2px;top:12.2px" width="4.4" height="5" viewBox="0 0 5 6"><path d="M0 0.5 H5" stroke="#222" stroke-width="0.9"/><path d="M0 2.2 H5 L2.5 5 Z" fill="#222"/></svg>

 </div>
 <div class="tabstrip">
  <div class="tab" style="left:7px;width:72px"><span class="tt" style="letter-spacing:0.098px;">Sin título1.ps1*</span></div><div class="tab act" style="left:80px;width:89px"><span class="tt" style="letter-spacing:0.098px;">Sin título2.ps1*</span><svg class="tx" viewBox="0 0 8 8"><path d="M0.7 0.7 L7.3 7.3 M7.3 0.7 L0.7 7.3"/></svg></div><div class="tab" style="left:169px;width:73px"><span class="tt" style="letter-spacing:0.098px;">Sin título3.ps1*</span></div>
  <svg class="collapse" viewBox="0 0 14 14"><defs><linearGradient id="cg1" x1="0" y1="0" x2="0" y2="1"><stop offset="0" stop-color="#ffffff"/><stop offset="1" stop-color="#dfe3ea"/></linearGradient></defs><circle cx="7" cy="7" r="5.8" fill="url(#cg1)" stroke="#9c9c9c" stroke-width="1"/><path d="M4.2 8.4 L7 5.6 L9.8 8.4" fill="none" stroke="#3b79d6" stroke-width="1.7"/></svg>
 </div>
 <div class="editor">
  <div class="edtext">
<div class="ln" style="top:2.30px">1</div>
<div class="ln" style="top:12.05px">2</div>
<div class="ln" style="top:21.80px">3</div>
<div class="ln" style="top:31.55px">4</div>
<div class="ln" style="top:41.30px">5</div>
<div class="ln" style="top:51.05px">6</div>
<div class="ln" style="top:60.80px">7</div>
<div class="ln" style="top:70.55px">8</div>
<div class="ln" style="top:80.30px">9</div>
<div class="ln" style="top:90.05px">10</div>
<div class="ln" style="top:99.80px">11</div>
<div class="ln" style="top:109.55px">12</div>
<div class="ln" style="top:119.30px">13</div>
<div class="ln" style="top:129.05px">14</div>
<div class="ln" style="top:138.80px">15</div>
<div class="ln" style="top:148.55px">16</div>
<div class="ln" style="top:158.30px">17</div>
<div class="ln" style="top:168.05px">18</div>
<div class="cl" style="top:2.30px"><span class="c">##Server</span></div>
<div class="cl" style="top:12.05px"><span class="v">$port</span><span class="o">=</span><span class="n">2050</span></div>
<div class="cl" style="top:21.80px"><span class="v">$IPEndPoint</span><span class="o">=</span><span class="k">New-Object</span> <span class="a">System.Net.IPEndPoint</span>(<span class="o">[</span><span class="t">IPAddress</span><span class="o">]</span><span class="o">::</span>Any<span class="o">,</span><span class="v">$port</span>)</div>
<div class="cl" style="top:31.55px"><span class="v">$TcpListener</span><span class="o">=</span><span class="k">New-Object</span> <span class="a">System.Net.Sockets.TcpListener</span> <span class="v">$IPEndPoint</span></div>
<div class="cl" style="top:41.30px"><span class="v">$TcpListener</span><span class="o">.</span>Start()</div>
<div class="cl" style="top:60.80px"><span class="v">$AcceptTcpClient</span><span class="o">=</span><span class="v">$TcpListener</span><span class="o">.</span>AcceptTcpClient()</div>
<div class="cl" style="top:70.55px"><span class="v">$GetStream</span><span class="o">=</span><span class="v">$AcceptTcpClient</span><span class="o">.</span>GetStream()</div>
<div class="cl" style="top:80.30px"><span class="v">$StreamReader</span><span class="o">=</span><span class="k">New-Object</span> <span class="a">System.IO.StreamReader</span> <span class="v">$GetStream</span></div>
<div class="cl" style="top:99.80px"><span class="v">$ReadAllLines</span> <span class="o">=</span> <span class="v">$StreamReader</span><span class="o">.</span>ReadToEnd()</div>
<div class="cl" style="top:109.55px"><span class="v">$Bytes</span> <span class="o">=</span> (<span class="o">[</span><span class="t">system.Text.Encoding</span><span class="o">]</span><span class="o">::</span>Default)<span class="o">.</span>GetBytes(<span class="v">$ReadAllLines</span>)</div>
<div class="cl" style="top:119.30px"><span class="o">[</span><span class="t">System.IO.File</span><span class="o">]</span><span class="o">::</span>WriteAllBytes(<span class="s">&#x27;F:\power\screenshotcopy.bmp&#x27;</span><span class="o">,</span><span class="v">$Bytes</span>)</div>
<div class="cl" style="top:138.80px"><span class="v">$StreamReader</span><span class="o">.</span>Dispose()</div>
<div class="cl" style="top:148.55px"><span class="v">$GetStream</span><span class="o">.</span>Dispose()</div>
<div class="cl" style="top:158.30px"><span class="v">$AcceptTcpClient</span><span class="o">.</span>Dispose()</div>
<div class="cl" style="top:168.05px"><span class="v">$TcpListener</span><span class="o">.</span>Stop<span class="hl">()</span></div>
  </div>
  <div class="vs" style="top:0;height:196px">
   <svg class="arr" style="top:4.8px" viewBox="0 0 7 4"><path d="M0.5 3.6 L3.5 0.7 L6.5 3.6"/></svg>
   <div class="thumb" style="top:13px;height:92.6px"></div>
   <svg class="arr" style="top:188.3px" viewBox="0 0 7 4"><path d="M0.5 0.5 L3.5 3.4 L6.5 0.5"/></svg>
  </div>
  <div class="hs" style="top:196px">
   <svg class="arrh" style="left:4px" viewBox="0 0 4 7"><path d="M3.5 0.5 L0.6 3.5 L3.5 6.5"/></svg>
   <div class="thumbh" style="left:12.5px;width:394.8px"></div>
   <svg class="arrh" style="left:483px" viewBox="0 0 4 7"><path d="M0.5 0.5 L3.4 3.5 L0.5 6.5"/></svg>
  </div>
 </div>
 <div class="splitter"></div>
 <div class="console">
  <div class="context">
<div class="kl" style="top:-4.35px">$TcpListener.Stop()</div>
<div class="kl" style="top:15.15px">PS F:\&gt; ##Server</div>
<div class="kl" style="top:24.90px">$port=2050</div>
<div class="kl" style="top:34.65px">$IPEndPoint=New-Object System.Net.IPEndPoint([IPAddress]::Any,$port)</div>
<div class="kl" style="top:44.40px">$TcpListener=New-Object System.Net.Sockets.TcpListener $IPEndPoint</div>
<div class="kl" style="top:54.15px">$TcpListener.Start()</div>
<div class="kl" style="top:73.65px">$AcceptTcpClient=$TcpListener.AcceptTcpClient()</div>
<div class="kl" style="top:83.40px">$GetStream=$AcceptTcpClient.GetStream()</div>
<div class="kl" style="top:93.15px">$StreamReader=New-Object System.IO.StreamReader $GetStream</div>
<div class="kl" style="top:112.65px">$ReadAllLines = $StreamReader.ReadToEnd()</div>
<div class="kl" style="top:122.40px">$Bytes = ([system.Text.Encoding]::Default).GetBytes($ReadAllLines)</div>
<div class="kl" style="top:132.15px">[System.IO.File]::WriteAllBytes(&quot;F:\power\screenshotcopy.bmp&quot;,$Bytes)</div>
<div class="kl" style="top:151.65px">$StreamReader.Dispose()</div>
<div class="kl" style="top:161.40px">$GetStream.Dispose()</div>
<div class="kl" style="top:171.15px">$AcceptTcpClient.Dispose()</div>
<div class="kl" style="top:180.90px">$TcpListener.Stop()</div>
<div class="kl" style="top:200.40px">PS F:\&gt;</div>
  </div>
  <div class="vs" style="top:0;height:211px">
   <svg class="arr" style="top:4.8px" viewBox="0 0 7 4"><path d="M0.5 3.6 L3.5 0.7 L6.5 3.6"/></svg>
   <div class="thumb" style="top:118.19999999999999px;height:40.80000000000001px"></div>
   <svg class="arr" style="top:203.7px" viewBox="0 0 7 4"><path d="M0.5 0.5 L3.5 3.4 L6.5 0.5"/></svg>
  </div>
  <div class="hs" style="top:211px">
   <svg class="arrh" style="left:4px" viewBox="0 0 4 7"><path d="M3.5 0.5 L0.6 3.5 L3.5 6.5"/></svg>
   <div class="thumbh" style="left:12.5px;width:425.5px"></div>
   <svg class="arrh" style="left:483px" viewBox="0 0 4 7"><path d="M0.5 0.5 L3.4 3.5 L0.5 6.5"/></svg>
  </div>
 </div>
 <div class="statusbar">
  <span class="st" style="left:8.5px;letter-spacing:0.154px;">Completado</span>
  <i class="ssep" style="left:285px"></i>
  <span class="st pos" style="left:294.7px;letter-spacing:-0.145px;">Lín. 18&nbsp; Col. 20</span>
  <i class="ssep" style="left:360px"></i>
  <i class="strack"></i><i class="sthumb"></i>
  <span class="st zoom" style="left:478px;word-spacing:-0.4px;letter-spacing:-0.192px;">100 %</span>
  <svg class="grip" viewBox="0 0 9 9"><g fill="#c3cfdd"><rect x="7" y="1" width="1" height="1"/><rect x="7" y="3" width="1" height="1"/><rect x="5" y="3" width="1" height="1"/><rect x="7" y="5" width="1" height="1"/><rect x="5" y="5" width="1" height="1"/><rect x="3" y="5" width="1" height="1"/><rect x="7" y="7" width="1" height="1"/><rect x="5" y="7" width="1" height="1"/><rect x="3" y="7" width="1" height="1"/><rect x="1" y="7" width="1" height="1"/></g></svg>
 </div>
</div>
</body></html>
